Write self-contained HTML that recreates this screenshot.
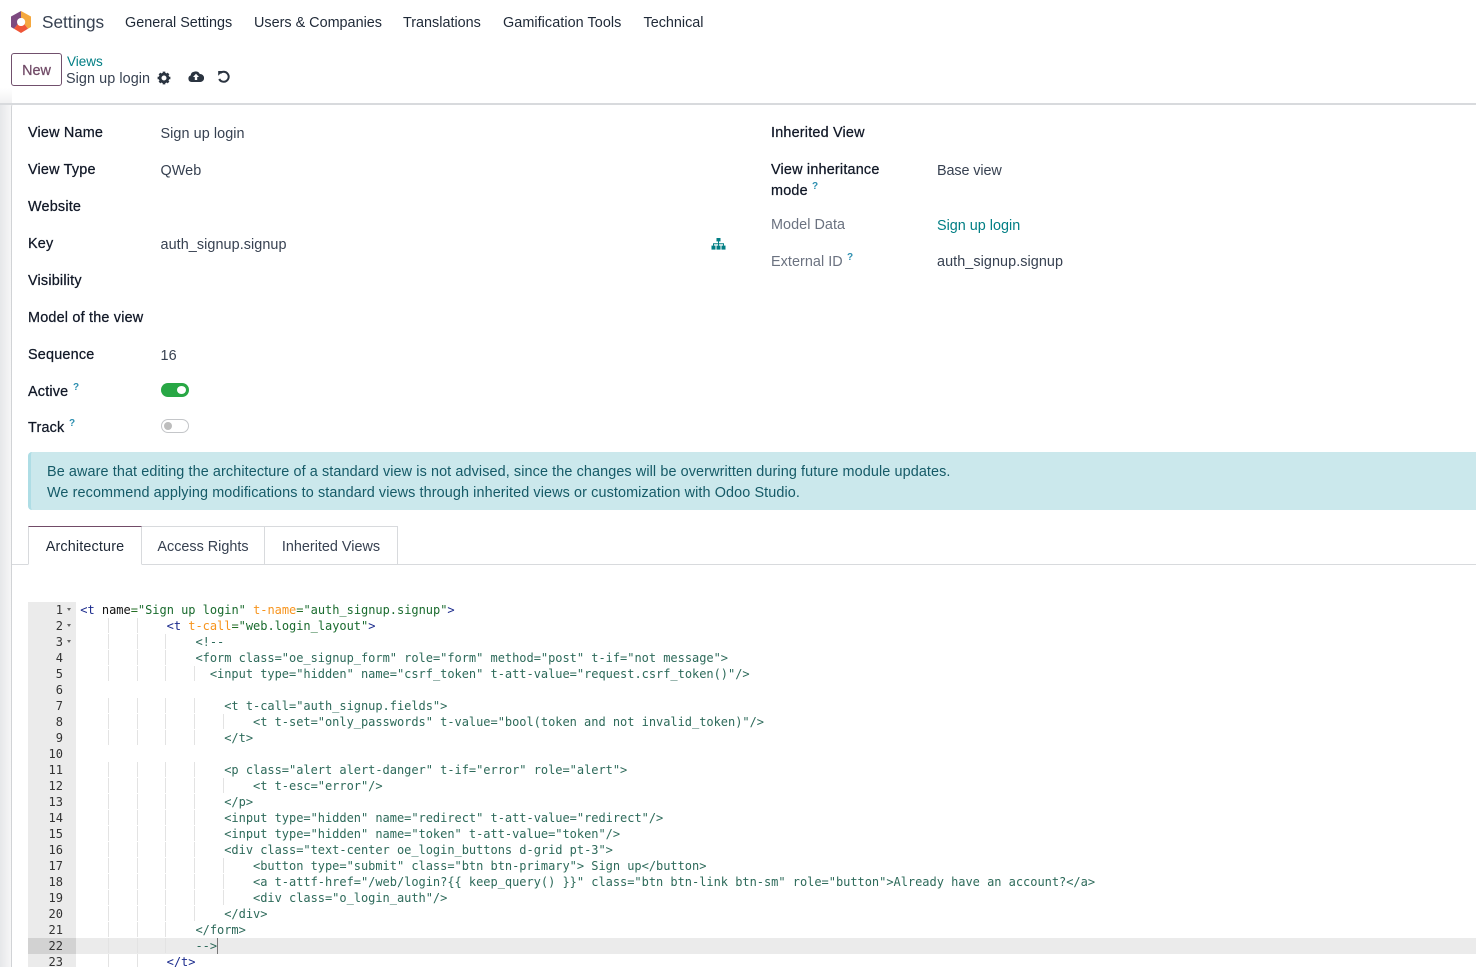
<!DOCTYPE html>
<html><head><meta charset="utf-8"><title>Sign up login</title>
<style>
html,body{margin:0;padding:0;background:#fff}
body{width:1476px;height:967px;position:relative;overflow:hidden;font-family:"Liberation Sans",sans-serif;font-size:14.4px;color:#374151}
.t{position:absolute;white-space:nowrap;line-height:20px;height:20px}
.b{color:#111827;font-weight:400;-webkit-text-stroke:.25px #111827;letter-spacing:.2px}
.v{color:#374151;letter-spacing:.07px}
.g{color:#6b7280;letter-spacing:.05px}
.l{color:#017e84}
.n{color:#1f2937}
sup{position:absolute;font-size:10px;color:#2d8fb0;line-height:10px;font-weight:700;-webkit-text-stroke:0}
#side{position:absolute;left:0;top:103px;width:11px;height:864px;background:linear-gradient(90deg,#e6e7e9,#f6f6f7)}
#topfade{position:absolute;left:0;top:88px;width:12px;height:15px;background:linear-gradient(180deg,#fff,#f1f1f2)}
#sheet{position:absolute;left:11px;top:103px;width:1465px;height:864px;background:#fff;border-left:1px solid #d1d3d6;border-top-left-radius:4px;box-sizing:border-box}
#hline{position:absolute;left:0;top:103px;width:1476px;height:2px;background:#d8dadd}
#alert{position:absolute;left:28px;top:452px;width:1448px;height:58px;background:#cbe8ec;border-left:3px solid #aedde5;border-radius:4px 0 0 4px;box-sizing:border-box;color:#155a67;font-size:14.4px;line-height:21px;padding:10px 0 0 16px;white-space:nowrap;letter-spacing:.105px}
.tab{position:absolute;top:526px;height:39px;box-sizing:border-box;border:1px solid #d8dadd;border-left:0;line-height:39px;text-align:center;font-size:14.4px;color:#374151}
.tab span{position:relative;top:1px}
#code{position:absolute;left:28px;top:602px;width:1448px;height:365px;overflow:hidden;font-family:"DejaVu Sans Mono","Liberation Mono",monospace;font-size:12px;line-height:16px;color:#236e24}
#gut{position:absolute;left:0;top:0;width:48px;height:368px;background:#ebebeb;color:#333;font-size:12px}
#gut div{height:16px;width:35px;text-align:right;padding-right:13px;position:relative;white-space:nowrap}
#gut div.cur{background:#d2d2d2}
#gut i{position:absolute;left:39px;top:6px;width:0;height:0;border-left:2.5px solid transparent;border-right:2.5px solid transparent;border-top:3px solid #666}
#lines{position:absolute;left:48px;top:0;width:1400px}
#lines pre{margin:0;height:16px;padding-left:4.3px;font:inherit;white-space:pre;background-repeat:no-repeat;letter-spacing:-.028px}
.g2{background-image:linear-gradient(#e3e3e3,#e3e3e3),linear-gradient(#e3e3e3,#e3e3e3);background-size:1px 15px,1px 15px;background-position:32px 0,61px 0}
.g3{background-image:linear-gradient(#e3e3e3,#e3e3e3),linear-gradient(#e3e3e3,#e3e3e3),linear-gradient(#e3e3e3,#e3e3e3);background-size:1px 15px,1px 15px,1px 15px;background-position:32px 0,61px 0,89px 0}
.g4{background-image:linear-gradient(#e3e3e3,#e3e3e3),linear-gradient(#e3e3e3,#e3e3e3),linear-gradient(#e3e3e3,#e3e3e3),linear-gradient(#e3e3e3,#e3e3e3);background-size:1px 15px,1px 15px,1px 15px,1px 15px;background-position:32px 0,61px 0,89px 0,118px 0}
.g5{background-image:linear-gradient(#e3e3e3,#e3e3e3),linear-gradient(#e3e3e3,#e3e3e3),linear-gradient(#e3e3e3,#e3e3e3),linear-gradient(#e3e3e3,#e3e3e3),linear-gradient(#e3e3e3,#e3e3e3);background-size:1px 15px,1px 15px,1px 15px,1px 15px,1px 15px;background-position:32px 0,61px 0,89px 0,118px 0,147px 0}
#lines pre.act{background-color:#ebebeb}
.m{color:#1a2a8c}.k{color:#111}.o{color:#f7941d}.s{color:#1a6b2e}.e{color:#2d6a5a}
#caret{position:absolute;left:217px;top:938px;width:1px;height:16px;background:#777}
</style></head>
<body>
<svg style="position:absolute;left:10px;top:10px" width="22" height="24" viewBox="0 0 22 24">
<path d="M11 1 L1 6.5 V17 L4 18.8 L8 14 A4 4 0 0 1 8 10 A4 4 0 0 1 11 8 Z" fill="#7d4a80"/>
<path d="M11 1 L21 6.5 V17 L18 18.8 L14.5 14.2 A4 4 0 0 0 11 8 Z" fill="#f5a83f"/>
<path d="M4 18.8 L11 23 L18 18.8 L14.5 14.2 A4.3 4.3 0 0 1 7.6 14.2 Z" fill="#ef5638"/>
<circle cx="11" cy="12" r="4" fill="#fff"/>
</svg>
<div class="t" style="left:42px;top:12px;font-size:17.2px;color:#374151">Settings</div>
<div class="t n" style="left:125px;top:13px">General Settings</div>
<div class="t n" style="left:254px;top:13px">Users &amp; Companies</div>
<div class="t n" style="left:403px;top:13px">Translations</div>
<div class="t n" style="left:503px;top:13px;letter-spacing:.06px">Gamification Tools</div>
<div class="t n" style="left:643.5px;top:13px">Technical</div>

<div style="position:absolute;left:11px;top:53px;width:51px;height:33px;box-sizing:border-box;border:1px solid #71506d;border-radius:3px;color:#714b67;text-align:center;line-height:34px;font-size:14.4px;-webkit-text-stroke:.25px #714b67">New</div>
<div class="t l" style="left:67px;top:52px;font-size:13.5px">Views</div>
<div class="t" style="left:66px;top:69px;color:#374151;letter-spacing:.07px">Sign up login</div>
<svg style="position:absolute;left:157px;top:71px" width="14" height="14" viewBox="0 0 14 14"><circle cx="7" cy="7" r="3.9" fill="none" stroke="#2b3440" stroke-width="2.8"/><g stroke="#2b3440" stroke-width="2.6"><path d="M7 .6V3M7 11v2.4M.6 7H3M11 7h2.4M2.5 2.5l1.7 1.7M9.8 9.8l1.7 1.7M2.5 11.5l1.7-1.7M9.8 4.2l1.7-1.7"/></g></svg>
<svg style="position:absolute;left:188px;top:70px" width="16" height="13" viewBox="0 0 16 13"><path d="M3.6 12A3.4 3.4 0 0 1 2.7 5.4 4 4 0 0 1 6 1.8 4.3 4.3 0 0 1 11.8 4 4 4 0 0 1 12.4 12Z" fill="#2b3440"/><path d="M8 3.8 11 7H9.2V10H6.8V7H5Z" fill="#fff"/></svg>
<svg style="position:absolute;left:217px;top:70px" width="14" height="14" viewBox="0 0 14 14"><path d="M3.2 3.2A5 5 0 1 1 2.2 9" fill="none" stroke="#2b3440" stroke-width="2"/><path d="M1.2 1 6 1 1.2 5.8Z" fill="#2b3440"/></svg>

<div id="topfade"></div>
<div id="side"></div>
<div id="sheet"></div>
<div id="hline"></div>

<div class="t b" style="left:28px;top:123px">View Name</div>
<div class="t v" style="left:160.5px;top:124px">Sign up login</div>
<div class="t b" style="left:28px;top:160px">View Type</div>
<div class="t v" style="left:160.5px;top:161px">QWeb</div>
<div class="t b" style="left:28px;top:197px">Website</div>
<div class="t b" style="left:28px;top:234px">Key</div>
<div class="t v" style="left:160.5px;top:235px">auth_signup.signup</div>
<svg style="position:absolute;left:711px;top:238px" width="15" height="12" viewBox="0 0 15 12"><g fill="#017e84"><rect x="5.5" y="0" width="4" height="3.4"/><rect x="0.5" y="7.6" width="4" height="4"/><rect x="5.5" y="7.6" width="4" height="4"/><rect x="10.5" y="7.6" width="4" height="4"/><path d="M7 3h1v2.2h5V7.6h-1V6.2H8V7.6H7V6.2H3V7.6H2V5.2h5Z"/></g></svg>
<div class="t b" style="left:28px;top:271px">Visibility</div>
<div class="t b" style="left:28px;top:308px">Model of the view</div>
<div class="t b" style="left:28px;top:345px">Sequence</div>
<div class="t v" style="left:160.5px;top:346px">16</div>
<div class="t b" style="left:28px;top:382px">Active</div><sup style="left:73px;top:383px">?</sup>
<div style="position:absolute;left:161px;top:383px;width:28px;height:14px;border-radius:7px;background:#28a745"></div>
<div style="position:absolute;left:177px;top:386px;width:9px;height:8px;border-radius:50%;background:#fff"></div>
<div class="t b" style="left:28px;top:418px">Track</div><sup style="left:69px;top:419px">?</sup>
<div style="position:absolute;left:161px;top:419px;width:28px;height:14px;box-sizing:border-box;border-radius:7px;background:#fff;border:1px solid #c4c6c9"></div>
<div style="position:absolute;left:164px;top:422px;width:8px;height:8px;border-radius:50%;background:#bdbdbd"></div>

<div class="t b" style="left:771px;top:123px">Inherited View</div>
<div class="t b" style="left:771px;top:160px">View inheritance</div>
<div class="t b" style="left:771px;top:181px">mode</div><sup style="left:812px;top:182px">?</sup>
<div class="t v" style="left:937px;top:161px;letter-spacing:-.1px">Base view</div>
<div class="t g" style="left:771px;top:215px">Model Data</div>
<div class="t l" style="left:937px;top:216px">Sign up login</div>
<div class="t g" style="left:771px;top:252px">External ID</div><sup style="left:847px;top:253px">?</sup>
<div class="t v" style="left:937px;top:252px">auth_signup.signup</div>

<div id="alert">Be aware that editing the architecture of a standard view is not advised, since the changes will be overwritten during future module updates.<br>We recommend applying modifications to standard views through inherited views or customization with Odoo Studio.</div>

<div style="position:absolute;left:12px;top:564px;width:1464px;height:1px;background:#d8dadd"></div>
<div class="tab" style="left:28px;width:114px;border-left:1px solid #d8dadd;border-top-color:#714b67;border-bottom-color:#fff;background:#fff;color:#1f2937;letter-spacing:.15px"><span>Architecture</span></div>
<div class="tab" style="left:142px;width:123px"><span>Access Rights</span></div>
<div class="tab" style="left:265px;width:133px"><span>Inherited Views</span></div>

<div id="code">
<div id="gut">
<div>1<i></i></div><div>2<i></i></div><div>3<i></i></div><div>4</div><div>5</div><div>6</div><div>7</div><div>8</div><div>9</div><div>10</div><div>11</div><div>12</div><div>13</div><div>14</div><div>15</div><div>16</div><div>17</div><div>18</div><div>19</div><div>20</div><div>21</div><div class="cur">22</div><div>23</div>
</div>
<div id="lines">
<pre><span class="m">&lt;t</span> <span class="k">name</span>=<span class="s">"Sign up login"</span> <span class="o">t-name</span>=<span class="s">"auth_signup.signup"</span><span class="m">&gt;</span></pre>
<pre class="g2">            <span class="m">&lt;t</span> <span class="o">t-call</span>=<span class="s">"web.login_layout"</span><span class="m">&gt;</span></pre>
<pre class="g3">                <span class="e">&lt;!--</span></pre>
<pre class="g3">                <span class="e">&lt;form class="oe_signup_form" role="form" method="post" t-if="not message"&gt;</span></pre>
<pre class="g4">                  <span class="e">&lt;input type="hidden" name="csrf_token" t-att-value="request.csrf_token()"/&gt;</span></pre>
<pre> </pre>
<pre class="g4">                    <span class="e">&lt;t t-call="auth_signup.fields"&gt;</span></pre>
<pre class="g5">                        <span class="e">&lt;t t-set="only_passwords" t-value="bool(token and not invalid_token)"/&gt;</span></pre>
<pre class="g4">                    <span class="e">&lt;/t&gt;</span></pre>
<pre> </pre>
<pre class="g4">                    <span class="e">&lt;p class="alert alert-danger" t-if="error" role="alert"&gt;</span></pre>
<pre class="g5">                        <span class="e">&lt;t t-esc="error"/&gt;</span></pre>
<pre class="g4">                    <span class="e">&lt;/p&gt;</span></pre>
<pre class="g4">                    <span class="e">&lt;input type="hidden" name="redirect" t-att-value="redirect"/&gt;</span></pre>
<pre class="g4">                    <span class="e">&lt;input type="hidden" name="token" t-att-value="token"/&gt;</span></pre>
<pre class="g4">                    <span class="e">&lt;div class="text-center oe_login_buttons d-grid pt-3"&gt;</span></pre>
<pre class="g5">                        <span class="e">&lt;button type="submit" class="btn btn-primary"&gt; Sign up&lt;/button&gt;</span></pre>
<pre class="g5">                        <span class="e">&lt;a t-attf-href="/web/login?{{ keep_query() }}" class="btn btn-link btn-sm" role="button"&gt;Already have an account?&lt;/a&gt;</span></pre>
<pre class="g5">                        <span class="e">&lt;div class="o_login_auth"/&gt;</span></pre>
<pre class="g4">                    <span class="e">&lt;/div&gt;</span></pre>
<pre class="g3">                <span class="e">&lt;/form&gt;</span></pre>
<pre class="g3 act">                <span class="e">--&gt;</span></pre>
<pre class="g2">            <span class="m">&lt;/t&gt;</span></pre>
</div>
</div>
<div id="caret"></div>
</body></html>
